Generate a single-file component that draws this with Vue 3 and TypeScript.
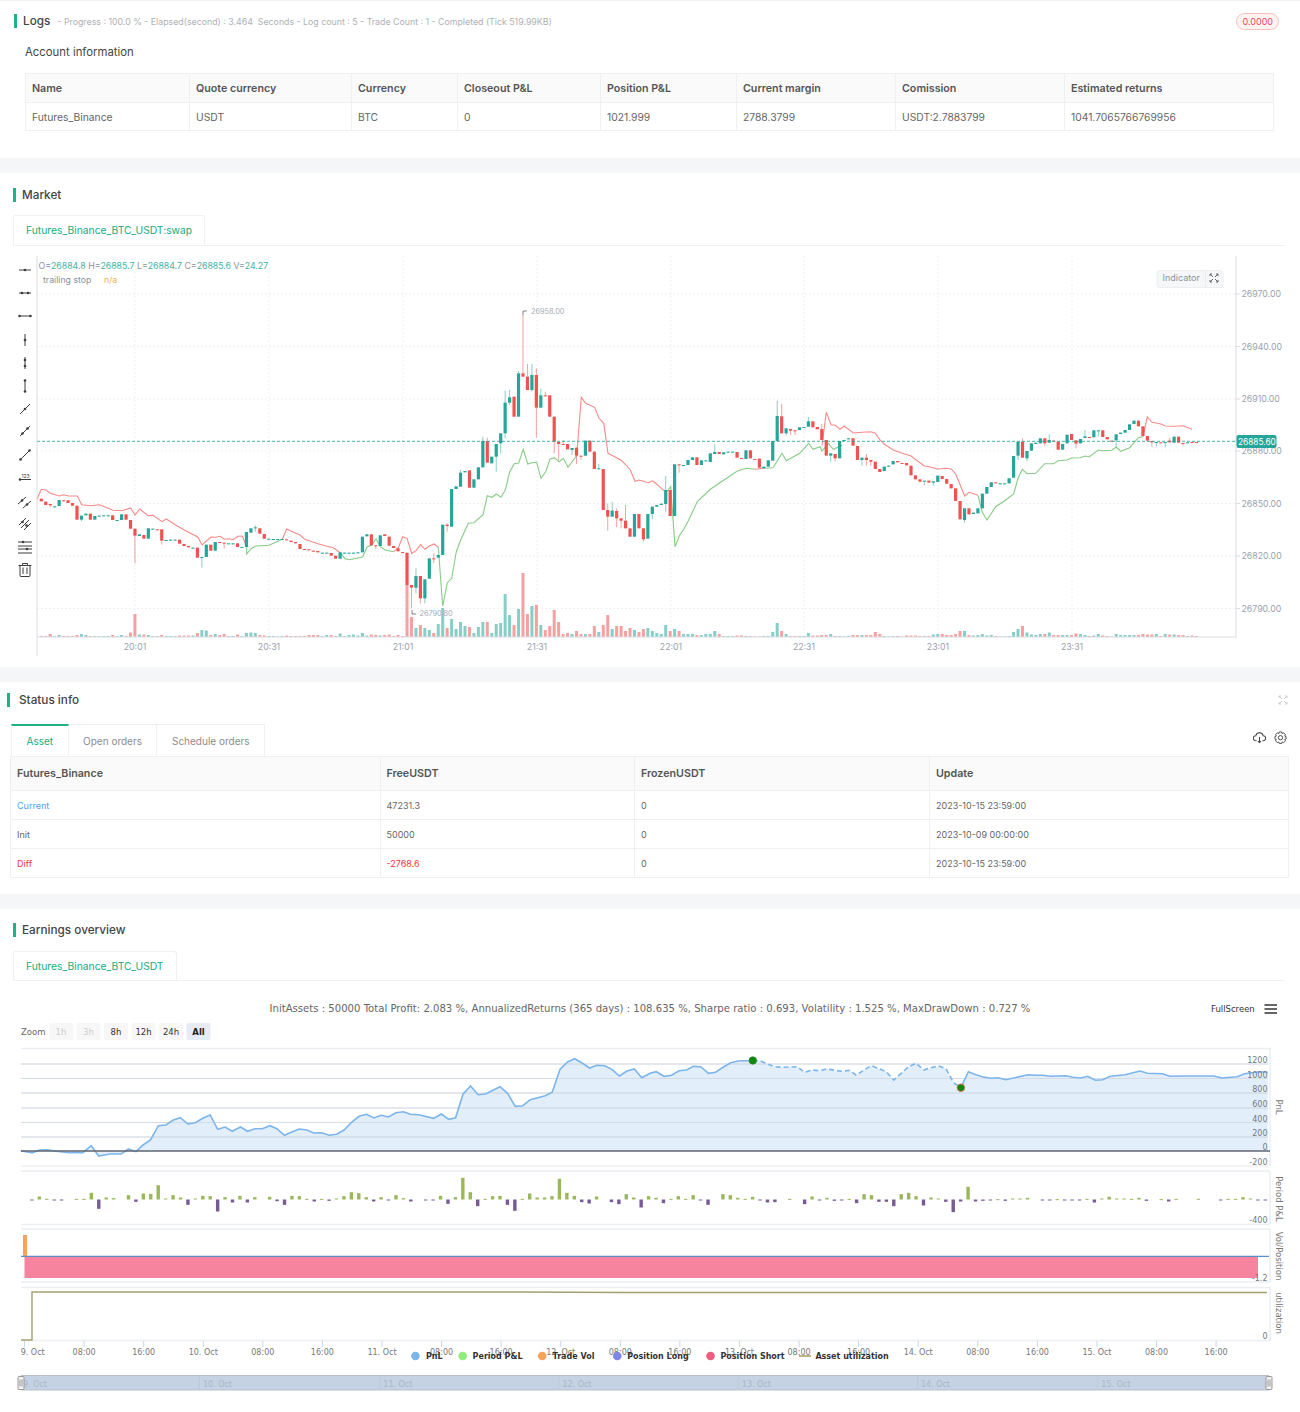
<script setup lang="ts">
// [open, close, wickTop, wickBottom], y measured in 1/3 px from the row base below
type Candle = [number, number, number?, number?];

const candlesA: Candle[] = [
  [746,754],[755,765],[762,766,0,772],[770,769],[768,750],[751,752],[751,759],[759,767],[767,809],[809,797,0,813],
  [796,791],[791,809],[809,798],[798,797],[797,796],[797,796],[796,810],[811,810],[810,793],[793,809],
  [810,836],[836,857,0,940],[858,853],[855,866],[866,835],[837,836],[838,839],[838,872,0,884],[871,870],[870,869],
  [870,869],[869,881],[882,888],[888,892],[894,893],[893,923],[923,921,0,953],[921,884],[884,902],[902,876],
  [876,877],[878,879,0,896],[881,880],[881,880],[880,891],[892,891],[891,846],[848,835],[835,832,826,845],[835,851],
  [852,866],[867,866],[868,867],[868,867],[868,867],[868,871],[872,876],[876,880],[882,897],[897,898],
  [898,901],[902,903],[903,907],[909,908],[909,908],[909,917],[917,926],[926,907],[909,908],[909,908],
  [909,908],[908,907],[907,860],[859,853],[853,886],[886,887,0,897],[888,856],[853,858],[860,887],[888,894],
  [895,904],[906,907],
];

const candlesB: Candle[] = [
  [788,885],[885,893,0,955],[893,858,835,910],[858,925,0,940],[925,868,0,940],[866,805],[805,808,790,820],[803,795],[795,704],[704,708,700,725],
  [710,597],[597,589],[590,548,540],[547,543],[541,593],[593,568],[568,532],[532,453,440],[453,518,443],[520,500],
  [500,462,0,545],[460,430,0,490],[430,338,302,445],[338,322,300,345],[320,380],[380,250,243],[250,260,75],[260,300,222],[300,255,222,305],[255,353,235,443],
  [353,316,296],[316,317,305],[316,380],[380,455,0,490],[456,462,0,510],[462,463,450],[462,478],[480,474,0,495],[473,497,0,522],[497,498,0,510],
  [497,452],[452,485],[485,537],[538,535,522],[537,660],[660,680,640,722],[680,662,635],[663,685,655,712],[685,692,0,715],[692,715,645],
  [715,740],[740,672],[672,715],[715,748,0,755],[746,672],[672,650,0,688],[650,645],[645,641],[642,600,558,665],[600,678],
  [678,523],[523,525,0,548],[526,525],[525,510],[510,502],[502,525],[525,511],[512,511],[516,490],[492,486,463],
  [486,492],[493,487],[486,485],[486,485],[486,503],[504,507],[507,481],[481,505],[507,508],[506,533],
  [535,530],[530,511],[512,453],[453,378,332],[379,430,342],[430,415,0,437],[417,422,0,435],[421,424,0,435],[420,412],[412,411],
  [410,394,381],[394,412],[411,418],[417,450,402],[450,497],[497,490,0,515],[492,505,0,515],[505,453],[451,450],[446,445],
  [445,467],[468,510],[510,503,0,527],[503,510,492,527],[510,515,0,527],[515,537],[537,546],[543,530],[528,527],[523,513],
  [513,517],[519,520],[519,526],[527,556],[556,568],[568,575],[575,572,0,585],[572,578],[578,574,0,587],[576,557],
  [558,567],[567,581],[582,595],[595,633],[633,688],[690,655,0,698],[655,673],[672,668],[670,655],[655,611],
  [611,591],[591,577],[577,578],[581,580],[581,580],[580,565],[563,498],[497,455,0,510],[455,503,445],[505,483,0,513],
  [482,460],[462,458],[460,445],[445,460,0,468],[458,450,433],[452,453],[455,479],[479,462],[460,434],[432,450],
  [451,461,0,475],[460,447],[444,439,420],[441,442],[442,421],[423,421,0,440],[421,441],[441,448],[452,453],[451,433,0,470],
  [432,428],[428,420],[420,403],[402,392],[392,409],[409,438],[438,452],[453,457,0,470],[457,456,0,470],[457,458],
  [457,456,0,472],[452,457,443],[458,440],[440,458],[459,460,0,467],[458,457],[456,457],[456,457],
];

const volumes = [
  1,1,3,1,2,1,1,1,2,3,2,1,1,1,1,1,2,1,2,1,4.5,23,
  2.5,2.5,2,1,1,2,1,1,1,1.5,1.5,1.5,1.5,4,7,6.5,2,3,2,3,1,1,2.5,1,4,4.5,4,2,1.5,1,1,0.5,1,1.5,1,1,1,1,2,2,2,1,2,2,1,3.5,1,2,2.5,1.5,4,1.5,2.5,2,1.5,2,2.5,1,2,1,
  52,20,9,12,9,7,4,13,29,9,18,8,15,11,10,4,10,15,15,4,13,14,43,22,12,28,64,23,31,32,12,7,11,27,15,3,4,3,6,3,3,3,11,5,12,22,8,11,11,6,9,7,5,8,9,6,4,3,12,6,8,6,3,3,3,2,2,3,3,6,3,
  1,1,1,1.5,1.5,1,1,0.5,0.5,1,1,5,14,6,3,1,1,1,1,4,1.5,1.5,
  2,2,3,1,1,0.5,1,2,2,2,2,2,5,3,1,0.5,1,1,0.5,1.5,1.5,1.5,1,1,1,2.5,3,3,2,2,3,6,6,2,1.5,2,3,1.5,2,1,0.5,0.5,1,5,8,11,4.5,2.5,2,3,3,4.5,2,2,2,2,2,3.5,3,2,1,1.5,3,1.5,1,0.5,3,2,2,2,2,2,3,2.5,2.5,3,1,3,2.5,2.5,2,2,1,1.5,1,1,
];

const candles = [
  ...candlesA.map((c) => ({ c, base: 250 })),
  ...candlesB.map((c) => ({ c, base: 290 })),
].map(({ c, base }, i) => {
  const [o, cl, hi, lo] = c;
  const y = (v: number) => base + v / 3;
  const up = cl < o;
  const top = y(Math.min(o, cl));
  return {
    x: 41.3 + i * 4.46,
    up,
    top,
    h: Math.max(Math.abs(o - cl) / 3, 1),
    hi: hi ? y(hi) : top,
    lo: lo ? y(lo) : top,
    vol: volumes[i] ?? 1,
  };
});

// traced points: x, y pairs in zoomed coords, mapped back to page px
const trace = (pts: number[], ox: number, oy: number, sx = 3, sy = 3) => {
  const out: string[] = [];
  for (let i = 0; i < pts.length; i += 2) out.push(`${(ox + pts[i] / sx).toFixed(1)},${(oy + pts[i + 1] / sy).toFixed(1)}`);
  return out.join(' ');
};

const stopLines = [
  { color: '#f98a88', pts: trace([111,748,124,718,138,720,151,730,178,738,191,734,205,738,232,738,245,764,272,767,299,764,339,781,366,782,392,774,405,795,419,777,445,797,459,796,486,815,499,807,526,824,553,840,593,861,606,885,633,861,647,862,660,859,673,868,687,866,700,869,713,859,727,858,740,890], 0, 250) },
  { color: '#86cc86', pts: trace([740,890,740,912,753,896,767,888,807,886,847,868], 0, 250) },
  { color: '#f98a88', pts: trace([847,868,860,837,874,844,900,855,914,868,954,881,981,889,1000,893,1021,908], 0, 250) },
  { color: '#86cc86', pts: trace([1021,908,1035,926,1048,929,1088,921,1101,891,1115,885,1128,866,1141,890,1155,900,1181,905], 0, 250) },
  { color: '#f98a88', pts: trace([-19,785,-5,773,8,740,21,745,35,790,48,782,62,764,75,778,88,768,102,762,115,772], 400, 290) },
  { color: '#86cc86', pts: trace([115,772,128,948,142,878,155,865,169,785,182,750,205,700,222,698,249,674,262,617,276,622,289,612,303,622,316,600,329,545,343,521,356,519,370,478,383,522,396,518,410,517,423,565,437,545,450,507,463,503,477,515,490,505,504,532,530,497], 400, 290) },
  { color: '#f98a88', pts: trace([530,497,544,322,557,340,584,352,597,385,611,400,624,490,638,497,664,511,678,525,691,540,705,574,718,570,745,578,758,573,772,584,798,608], 400, 290) },
  { color: '#86cc86', pts: trace([798,608,812,590,825,770,838,738,852,716,865,692,892,635,932,597,1012,543,1039,535,1065,538], 400, 290) },
  { color: '#f98a88', pts: trace([1065,538,1092,535], 400, 290) },
  { color: '#86cc86', pts: trace([1092,535,1119,533,1146,490,1159,512,1199,490,1226,460,1239,478,1260,470,1266,484,1285,460,1300,478,1326,466], 400, 290) },
  { color: '#f98a88', pts: trace([66,466,79,367,93,404,106,406,120,418,133,408,160,429,186,427,213,425,226,430,240,450,253,463,280,480,307,490,333,498,373,528,387,530,413,537,440,535,454,537,467,552,494,618,507,607,534,616], 800, 290) },
  { color: '#86cc86', pts: trace([534,616,547,667,561,690,587,650,614,632,641,612,654,565,667,538,681,551,707,550,734,521,761,521,774,512,801,510,815,504,841,503,855,498,868,500,895,480,908,482,935,481,949,471,962,484,989,473,1015,443,1029,440], 800, 290) },
  { color: '#f98a88', pts: trace([1029,440,1042,381,1055,396,1082,402,1096,408,1122,409,1149,407,1176,418], 800, 290) },
];

const priceLevels = [
  { y: 294, label: '26970.00' }, { y: 346.5, label: '26940.00' }, { y: 399, label: '26910.00' }, { y: 451, label: '26880.00' },
  { y: 503.5, label: '26850.00' }, { y: 556, label: '26820.00' }, { y: 608.5, label: '26790.00' },
];
const timeMarks = [
  { x: 135, label: '20:01' }, { x: 269, label: '20:31' }, { x: 403, label: '21:01' }, { x: 537, label: '21:31' },
  { x: 671, label: '22:01' }, { x: 804, label: '22:31' }, { x: 938, label: '23:01' }, { x: 1072, label: '23:31' },
];

const toolDots = (ax: number, ay: number, bx: number, by: number) => [[ax, ay], [bx, by]];
const tools = [
  { y: 270, d: 'M-6 0H6', dots: [[0, 0]] },
  { y: 293, d: 'M-6 0H6', dots: toolDots(-3, 0, 3, 0) },
  { y: 316, d: 'M-6 0H6', dots: toolDots(-5.5, 0, 5.5, 0) },
  { y: 340, d: 'M0-6V6', dots: [[0, 0]] },
  { y: 363, d: 'M0-6V6', dots: toolDots(0, -3, 0, 3) },
  { y: 386, d: 'M0-6V6', dots: toolDots(0, -5.5, 0, 5.5) },
  { y: 409, d: 'M-5 5L5-5', dots: [[0, 0]] },
  { y: 431, d: 'M-5 5L5-5', dots: toolDots(-2.5, 2.5, 2.5, -2.5) },
  { y: 455, d: 'M-5 5L5-5', dots: toolDots(-4.5, 4.5, 4.5, -4.5) },
  { y: 477, d: 'M-6 2.5H6', dots: [[-5, 2.5]] },
  { y: 502, d: 'M-7 2L1-5M-2 6L6-1', dots: toolDots(-3, -1.5, 2, 2.5) },
  { y: 523, d: 'M-6 2L1-5M-4 5L4-3M-1 7L6 0', dots: toolDots(-2.5, -1, 1.5, 2.5) },
  { y: 547, d: 'M-7-5H7M-7-1H7M-7 2H7M-7 6H7', dots: toolDots(-2, -5, 2, 2) },
];

const equitySolid = [50,482,78,489,95,480,115,479,135,484,165,488,200,488,220,467,238,498,265,492,292,492,310,477,328,485,345,465,363,450,382,407,400,405,418,390,435,383,453,402,471,398,490,384,507,375,525,418,543,411,560,424,580,411,597,424,615,416,633,416,651,407,668,416,686,436,705,425,722,417,740,420,757,429,775,428,794,436,812,433,830,420,848,397,866,379,884,373,902,384,919,376,937,381,955,368,973,365,990,373,1010,374,1046,385,1065,372,1082,388,1099,383,1117,312,1135,288,1153,314,1171,312,1206,290,1224,310,1243,349,1261,347,1279,329,1315,317,1332,307,1351,238,1369,216,1386,206,1404,219,1422,234,1440,226,1458,227,1476,238,1494,258,1512,243,1530,237,1548,263,1568,250];
const equityMid = [0,250,15,245,34,259,52,256,70,242,88,240,105,229,123,231,141,250,158,247,176,232,195,218,212,213,230,212,248,212];
const equityDrop = [248,212,265,212,283,222,301,230,319,232,355,230,373,247,390,240,408,242,426,237,462,244,480,241,498,256,516,240,534,227,552,236,570,245,588,270,606,250,624,230,642,220,660,240,678,233,696,228,714,236,732,278,750,293];
const equityEnd = [750,293,768,245,786,254,804,261,822,265,840,263,858,269,912,254,930,256,948,256,966,259,1002,257,1020,262,1038,264,1056,259,1074,271,1092,269,1110,259,1146,254,1182,243,1200,250,1236,251,1254,259,1290,258,1360,258,1380,264,1416,260,1434,251,1470,245,1490,247];

const XS = 2.412;
const eqA = trace(equitySolid, 0, 990, XS);
const eqB = trace(equityMid, 650, 990, XS);
const eqDash = trace(equityDrop, 650, 990, XS);
const eqC = trace(equityEnd, 650, 990, XS);
const equityArea = `20.7,1151 ${eqA} ${eqB} ${eqDash} ${eqC} 1268,1151`;

const pnlValues = [
  -2,9,2,-1,-1,0,2,2,20,-28,6,4,0,13,-7,18,17,43,3,13,6,-16,3,11,10,-36,7,-9,11,-9,7,0,8,-5,-16,11,10,2,-6,2,-4,3,10,22,19,7,-6,7,-2,13,4,-6,0,-2,-2,11,-13,7,65,22,-20,2,10,11,-16,-34,2,18,6,6,10,62,20,11,-8,-12,9,0,-8,-14,16,6,-24,10,
  5,-11,2,10,2,13,-2,-16,0,16,13,5,2,8,-2,-9,-8,0,2,0,-14,9,-2,5,-4,-2,2,-11,16,13,-7,-7,-20,16,20,10,-18,6,3,-7,-38,-6,38,-6,-4,-2,1,-4,3,3,5,0,-1,-1,1,-1,-1,-1,2,-9,3,8,3,3,2,5,-4,0,1,-6,2,0,0,2,0,0,-1,2,2,7,3,-3,-2,
];
const pnlBars = pnlValues.map((v, i) => ({
  x: 30.2 + i * 7.43,
  y: v > 0 ? 1199.5 - v / 3 : 1199.5,
  h: Math.max(Math.abs(v) / 3, v === 0 ? 0 : 1),
  up: v > 0,
}));

const pnlGrid = [1064, 1078.5, 1093, 1108, 1122.5, 1137, 1166];
const axisLabels = [
  { y: 1063, t: '1200' }, { y: 1077.5, t: '1000' }, { y: 1092, t: '800' }, { y: 1107, t: '600' }, { y: 1121.5, t: '400' },
  { y: 1136, t: '200' }, { y: 1150, t: '0' }, { y: 1165, t: '-200' }, { y: 1223, t: '-400' }, { y: 1281, t: '-1.2' }, { y: 1339, t: '0' },
];
const sideTitles = [
  { y: 1107, t: 'PnL' }, { y: 1199, t: 'Period P&L' }, { y: 1256, t: 'Vol/Position' }, { y: 1313, t: 'utilization' },
];

const tickNames = ['9. Oct', '08:00', '16:00', '10. Oct', '08:00', '16:00', '11. Oct', '08:00', '16:00', '12. Oct', '08:00', '16:00', '13. Oct', '08:00', '16:00', '14. Oct', '08:00', '16:00', '15. Oct', '08:00', '16:00'];
const xTicks = tickNames.map((t, i) => {
  const x = 24.5 + i * 59.58;
  return { t, x, lx: i === 0 ? 32.7 : x };
});

const rangeButtons = [
  { x: 49, w: 24, t: '1h', off: true }, { x: 76.5, w: 24, t: '3h', off: true }, { x: 104, w: 24, t: '8h' },
  { x: 131.5, w: 24, t: '12h' }, { x: 159, w: 24, t: '24h' }, { x: 186.5, w: 24, t: 'All', on: true },
];
const legend = [
  { cx: 415.4, tx: 426, color: '#7cb5ec', t: 'PnL' }, { cx: 462.7, tx: 472.6, color: '#90ed7d', t: 'Period P&L' },
  { cx: 542.2, tx: 552.6, color: '#f7a35c', t: 'Trade Vol' }, { cx: 617.3, tx: 627.2, color: '#8085e9', t: 'Position Long' },
  { cx: 710.5, tx: 720.5, color: '#f15c80', t: 'Position Short' },
];
const navMarks = [
  { x: 199.4, t: '10. Oct' }, { x: 379.8, t: '11. Oct' }, { x: 558.9, t: '12. Oct' }, { x: 738.3, t: '13. Oct' }, { x: 917.4, t: '14. Oct' }, { x: 1097.8, t: '15. Oct' },
];

const accountCols = ['Name', 'Quote currency', 'Currency', 'Closeout P&L', 'Position P&L', 'Current margin', 'Comission', 'Estimated returns'];
const accountRow = ['Futures_Binance', 'USDT', 'BTC', '0', '1021.999', '2788.3799', 'USDT:2.7883799', '1041.7065766769956'];
const accountWidths = [164, 162, 106, 143, 136, 159, 169, 209];

const assetCols = ['Futures_Binance', 'FreeUSDT', 'FrozenUSDT', 'Update'];
const assetRows = [
  { name: 'Current', free: '47231.3', frozen: '0', time: '2023-10-15 23:59:00', cls: 'blue' },
  { name: 'Init', free: '50000', frozen: '0', time: '2023-10-09 00:00:00', cls: '' },
  { name: 'Diff', free: '-2768.6', frozen: '0', time: '2023-10-15 23:59:00', cls: 'red' },
];
const assetWidths = [369.5, 254.5, 295, 359];
</script>

<template>
  <main class="page">
    <section class="panel logs">
      <header class="head">
        <div class="title"><h2>Logs</h2><span class="progress">- Progress : 100.0 % - Elapsed(second) : 3.464&nbsp; Seconds - Log count : 5 - Trade Count : 1 - Completed (Tick 519.99KB)</span></div>
        <span class="badge">0.0000</span>
      </header>
      <h3 class="account-title">Account information</h3>
      <table class="grid account">
        <colgroup><col v-for="w in accountWidths" :key="w" :style="{ width: w + 'px' }" /></colgroup>
        <thead><tr><th v-for="c in accountCols" :key="c">{{ c }}</th></tr></thead>
        <tbody><tr><td v-for="c in accountRow" :key="c">{{ c }}</td></tr></tbody>
      </table>
    </section>

    <section class="panel market">
      <header class="head"><div class="title"><h2>Market</h2></div></header>
      <div class="tabs"><span class="tab solo wide">Futures_Binance_BTC_USDT:swap</span></div>
      <svg class="chart" width="1300" height="421" viewBox="0 246 1300 421">
        <g class="grid-lines">
          <line v-for="p in priceLevels" :key="p.y" x1="37" x2="1236" :y1="p.y" :y2="p.y" />
          <line v-for="t in timeMarks" :key="t.x" :x1="t.x" :x2="t.x" y1="256" y2="637" />
        </g>
        <rect v-for="(c, i) in candles" :key="'v' + i" :x="c.x - 1.5" :y="637 - c.vol" width="3" :height="c.vol" :fill="c.up ? '#26a69a' : '#ef5350'" fill-opacity=".55" />
        <polyline v-for="(l, i) in stopLines" :key="i" :points="l.pts" fill="none" :stroke="l.color" stroke-width="1.1" />
        <g v-for="(c, i) in candles" :key="'c' + i" :fill="c.up ? '#26a69a' : '#ef5350'">
          <rect :x="c.x - 0.5" :y="c.hi" width="1" :height="Math.max(c.lo - c.hi, c.top + c.h - c.hi)" fill-opacity=".55" />
          <rect :x="c.x - 1.6" :y="c.top" width="3.2" :height="c.h" />
        </g>
        <line x1="37" x2="1236" y1="441.3" y2="441.3" stroke="#26a69a" stroke-opacity=".85" stroke-dasharray="3 2" />
        <path d="M37 256V656M37 637H1236M1236 256V637" fill="none" stroke="#d9dce1" />

        <g v-for="p in priceLevels" :key="'l' + p.y">
          <line x1="1236" x2="1240" :y1="p.y" :y2="p.y" stroke="#d9dce1" />
          <text class="axis-text" x="1241.5" :y="p.y + 3">{{ p.label }}</text>
        </g>
        <text v-for="t in timeMarks" :key="'t' + t.x" class="axis-text" :x="t.x" y="649.5" text-anchor="middle">{{ t.label }}</text>

        <rect x="1236.5" y="435" width="40" height="13" rx="2" fill="#26a69a" />
        <text class="tag-text" x="1238" y="444.5">26885.60</text>

        <text class="ohlc" x="38.5" y="269">O=<tspan class="teal">26884.8</tspan> H=<tspan class="teal">26885.7</tspan> L=<tspan class="teal">26884.7</tspan> C=<tspan class="teal">26885.6</tspan> V=<tspan class="teal">24.27</tspan></text>
        <text class="ohlc" x="43" y="282.5">trailing stop</text>
        <text class="ohlc na" x="104" y="282.5">n/a</text>

        <rect x="1157" y="270.5" width="66" height="17" rx="3" fill="#f6f7f8" stroke="#eceef0" />
        <line x1="1205.5" x2="1205.5" y1="271" y2="287" stroke="#e9ebee" />
        <text class="indicator" x="1162.5" y="281">Indicator</text>
        <path d="M1210 274l3 3M1210 274h2M1210 274v2M1218 274l-3 3M1218 274h-2M1218 274v2M1210 282l3-3M1210 282h2M1210 282v-2M1218 282l-3-3M1218 282h-2M1218 282v-2" fill="none" stroke="#666" stroke-width="1" />

        <path d="M523 311v4M523 311h4" fill="none" stroke="#666" stroke-width=".8" />
        <text class="mark-text" x="531" y="313.5">26958.00</text>
        <path d="M412 610v4h4" fill="none" stroke="#666" stroke-width=".8" />
        <text class="mark-text" x="419.5" y="615.5">26790.80</text>

        <g v-for="t in tools" :key="t.y" :transform="`translate(25 ${t.y})`" stroke="#3d3d3d" fill="#3d3d3d" stroke-width="1">
          <path :d="t.d" fill="none" />
          <circle v-for="(d, i) in t.dots" :key="i" :cx="d[0]" :cy="d[1]" r="1.3" stroke="none" />
        </g>
        <text class="tool-123" x="21.5" y="478">123</text>
        <g transform="translate(25 570)" fill="none" stroke="#3d3d3d" stroke-width="1">
          <path d="M-6.5-4.5H6.5M-2.5-4.5V-6.5H2.5V-4.5M-5-4.5V5.5Q-5 6.5-4 6.5H4Q5 6.5 5 5.5V-4.5M-2-2.5V4M2-2.5V4" />
        </g>
      </svg>
    </section>

    <section class="panel status">
      <header class="head">
        <div class="title wide"><h2>Status info</h2></div>
        <svg class="expand" width="10" height="10" viewBox="0 0 10 10"><path d="M1 1l3 3M1 1h2M1 1v2M9 1L6 4M9 1H7M9 1v2M1 9l3-3M1 9h2M1 9V7M9 9L6 6M9 9H7M9 9V7" fill="none" stroke="#ccc" /></svg>
      </header>
      <div class="status-tabs">
        <div class="tab-row">
          <span class="stab active">Asset</span>
          <span class="stab">Open orders</span>
          <span class="stab">Schedule orders</span>
        </div>
        <div class="actions">
          <svg width="13" height="13" viewBox="0 0 14 14"><path d="M3.8 10.5H3.2A2.7 2.7 0 0 1 3 5.1 4.1 4.1 0 0 1 11 5.1 2.7 2.7 0 0 1 10.8 10.5H10.2M7 6.5V12.5M5.3 10.8L7 12.5 8.7 10.8" fill="none" stroke="#444" stroke-width="1.1" /></svg>
          <svg width="13" height="13" viewBox="0 0 14 14"><path d="M5.7 1H8.3L8.8 2.8 10.4 2 12.3 3.9 11.5 5.5 13 6V8.6L11.5 9.1 12.3 10.7 10.4 12.6 8.8 11.8 8.3 13.4H5.7L5.2 11.8 3.6 12.6 1.7 10.7 2.5 9.1 1 8.6V6L2.5 5.5 1.7 3.9 3.6 2 5.2 2.8Z" fill="none" stroke="#444" stroke-width="1" /><circle cx="7" cy="7.2" r="2.3" fill="none" stroke="#444" /></svg>
        </div>
      </div>
      <table class="grid asset">
        <colgroup><col v-for="w in assetWidths" :key="w" :style="{ width: w + 'px' }" /></colgroup>
        <thead><tr><th v-for="c in assetCols" :key="c">{{ c }}</th></tr></thead>
        <tbody>
          <tr v-for="r in assetRows" :key="r.name">
            <td :class="r.cls">{{ r.name }}</td>
            <td :class="{ red: r.cls === 'red' }">{{ r.free }}</td>
            <td>{{ r.frozen }}</td>
            <td>{{ r.time }}</td>
          </tr>
        </tbody>
      </table>
    </section>

    <section class="panel earnings">
      <header class="head"><div class="title"><h2>Earnings overview</h2></div></header>
      <div class="tabs short"><span class="tab solo">Futures_Binance_BTC_USDT</span></div>
      <svg class="chart hc" width="1300" height="431" viewBox="0 981 1300 431">
        <text class="hc-title" x="650" y="1011.5" text-anchor="middle">InitAssets : 50000 Total Profit: 2.083 %, AnnualizedReturns (365 days) : 108.635 %, Sharpe ratio : 0.693, Volatility : 1.525 %, MaxDrawDown : 0.727 %</text>
        <text class="hc-small dark" x="1211" y="1012">FullScreen</text>
        <path d="M1264.5 1005H1277M1264.5 1009H1277M1264.5 1013H1277" stroke="#666" stroke-width="2" />

        <text class="hc-small" x="21" y="1035">Zoom</text>
        <g v-for="b in rangeButtons" :key="b.t">
          <rect :x="b.x" y="1023" :width="b.w" height="17" rx="2" :fill="b.on ? '#e6ebf5' : '#f7f7f7'" />
          <text class="hc-small" :class="{ off: b.off, on: b.on, dark: !b.off }" :x="b.x + b.w / 2" y="1035" text-anchor="middle">{{ b.t }}</text>
        </g>

        <path d="M21 1048.5H1270M21 1171H1270M21 1224.5H1270M21 1229H1270M21 1282H1270M21 1287.5H1270M21 1340.5H1270" stroke="#eceef2" stroke-width="1.5" fill="none" />
        <path d="M1270 1048V1166M1270 1171V1224M1270 1229V1282M1270 1287V1341" stroke="#dfe5f0" fill="none" />
        <line v-for="y in pnlGrid" :key="y" x1="21" x2="1268" :y1="y" :y2="y" stroke="#e6e6e6" />

        <polygon :points="equityArea" fill="#7cb5ec" fill-opacity=".22" />
        <line v-for="y in pnlGrid.slice(0, 6)" :key="'o' + y" x1="21" x2="1268" :y1="y" :y2="y" stroke="#d5dce6" />
        <polyline :points="`${eqA} ${eqB}`" fill="none" stroke="#7cb5ec" stroke-width="1.6" />
        <polyline :points="eqDash" fill="none" stroke="#7cb5ec" stroke-width="1.6" stroke-dasharray="5 3" />
        <polyline :points="eqC" fill="none" stroke="#7cb5ec" stroke-width="1.6" />
        <line x1="21" x2="1270" y1="1151" y2="1151" stroke="#5f6670" stroke-width="1.4" />
        <circle cx="752.8" cy="1060.5" r="3.8" fill="#0a8a0a" stroke="#3a7a3a" stroke-width=".6" />
        <circle cx="960.9" cy="1087.7" r="3.8" fill="#0a8a0a" stroke="#e8735a" stroke-width=".9" />

        <rect v-for="(b, i) in pnlBars" :key="'p' + i" :x="b.x" :y="b.y" width="3.4" :height="b.h" :fill="b.up ? '#9ab75c' : '#7a5a96'" />

        <rect x="24.5" y="1257" width="1233.5" height="21" fill="#f7849f" />
        <rect x="23" y="1235" width="4" height="21.5" fill="#f7a35c" />
        <line x1="21" x2="1269" y1="1256.3" y2="1256.3" stroke="#5a8fc7" stroke-width="1.2" />

        <polyline points="21,1340 32,1340 32,1292 520,1292 620,1292.5 1267,1292.5" fill="none" stroke="#a59e72" stroke-width="1.4" />

        <g v-for="t in xTicks" :key="t.x">
          <line :x1="t.x" :x2="t.x" y1="1341" y2="1347" stroke="#ccd6eb" />
          <text class="hc-tick" :x="t.lx" y="1354.5" text-anchor="middle">{{ t.t }}</text>
        </g>
        <text v-for="a in axisLabels" :key="a.y" class="hc-tick" x="1267.5" :y="a.y" text-anchor="end">{{ a.t }}</text>
        <text v-for="s in sideTitles" :key="s.t" class="hc-tick side" x="0" y="0" text-anchor="middle" :transform="`translate(1276 ${s.y}) rotate(90)`">{{ s.t }}</text>

        <g v-for="l in legend" :key="l.t">
          <circle :cx="l.cx" cy="1356" r="4.3" :fill="l.color" />
          <text class="hc-legend" :x="l.tx" y="1359">{{ l.t }}</text>
        </g>
        <line x1="799" x2="811" y1="1356" y2="1356" stroke="#a59a5d" stroke-width="1.5" />
        <text class="hc-legend" x="815.4" y="1359">Asset utilization</text>

        <rect x="21" y="1375" width="1248" height="15" fill="#c5d2e3" />
        <path d="M21 1375.5H1269M21 1390H1269" stroke="#b9bfc8" fill="none" />
        <text class="nav-text" x="23" y="1387">9. Oct</text>
        <g v-for="m in navMarks" :key="m.t">
          <line :x1="m.x" :x2="m.x" y1="1375" y2="1390" stroke="#bccadd" />
          <text class="nav-text" :x="m.x + 3.5" y="1387">{{ m.t }}</text>
        </g>
        <g v-for="x in [17.5, 1265.5]" :key="x" :transform="`translate(${x} 1376)`">
          <rect x=".5" y=".5" width="6" height="13" rx="1" fill="#f2f2f2" stroke="#999" />
          <path d="M2.5 3.5V10.5M4.5 3.5V10.5" stroke="#999" />
        </g>
      </svg>
    </section>
  </main>
</template>

<style>
html, body { margin: 0; background: #fff; }
</style>

<style scoped>
.page {
  width: 1300px;
  height: 1412px;
  overflow: hidden;
  background: #f5f6f8;
  font-family: Inter, "Liberation Sans", sans-serif;
  color: #444;
}

.panel {
  background: #fff;
  margin-bottom: 15px;
}

.logs {
  border-top: 1px solid #eff0f2;
  padding: 13px 0 27px;
}

.head {
  height: 14px;
  display: flex;
  justify-content: space-between;
  align-items: center;
}

.title {
  display: flex;
  align-items: center;
  height: 14px;
  margin-left: 13px;
  padding-left: 6px;
  border-left: 3px solid #1eb284;
}

.logs .title { margin-left: 14px; }

.title h2 {
  margin: 0;
  font-size: 11.75px;
  line-height: 14px;
  font-weight: 500;
  color: #444;
}

.title.wide { margin-left: 7px; padding-left: 9px; }

.progress {
  margin-left: 7px;
  font-size: 8.8px;
  color: #aeb1b6;
}

.badge {
  margin-right: 21px;
  height: 15px;
  line-height: 15px;
  padding: 0 5px;
  border: 1px solid #f9c0c0;
  border-radius: 9px;
  background: #fff3f2;
  color: #ec4a58;
  font-size: 9px;
}

.account-title {
  margin: 16px 0 13px 25px;
  font-size: 11.35px;
  line-height: 16px;
  font-weight: 400;
  color: #444;
}

.grid {
  border-collapse: collapse;
  table-layout: fixed;
}

.grid th, .grid td {
  border: 1px solid #f0f0f0;
  text-align: left;
  padding: 0 6px;
  white-space: nowrap;
}

.grid th {
  background: #fafafa;
  font-size: 10.7px;
  font-weight: 600;
  color: #555;
}

.grid td { color: #666; }

.account { width: 1249px; margin-left: 25px; }
.account th { height: 28px; }
.account td { height: 27px; font-size: 10.3px; }

.market { padding-top: 15px; height: 479px; }

.tabs {
  margin: 13px 15px 0 13px;
  height: 30px;
  border-bottom: 1px solid #f0f0f0;
}

.tabs.short { height: 29px; margin-top: 14px; }
.tabs.short .tab { line-height: 28px; }

.tab {
  display: inline-block;
  box-sizing: border-box;
  height: 100%;
  padding: 0 12px;
  line-height: 29px;
  font-size: 10.3px;
  color: #17ac7e;
  background: #fff;
  border: 1px solid #f0f0f0;
  border-bottom: 0;
  border-radius: 3px 3px 0 0;
}

.chart { display: block; }

.grid-lines line {
  stroke: #f0f1f3;
  stroke-dasharray: 2 2;
}

.axis-text { font-size: 8.75px; fill: #9aa1ab; }
.tag-text { font-size: 8.3px; fill: #fff; }
.ohlc { font-size: 8.75px; fill: #8b929c; }
.ohlc .teal { fill: #3fb3a6; }
.ohlc.na { fill: #f5ad55; }
.indicator { font-size: 9px; fill: #8d939c; }
.mark-text { font-size: 7.3px; fill: #a4abb6; }
.tool-123 { font-size: 5px; fill: #3d3d3d; }

.status { padding-top: 11px; height: 201px; }

.expand { margin-right: 12px; }

.status-tabs {
  margin: 17px 11px 0;
  height: 32px;
  display: flex;
  justify-content: space-between;
}

.tab-row { display: flex; height: 32px; }

.stab {
  box-sizing: border-box;
  padding: 0 14.5px;
  line-height: 32px;
  font-size: 10px;
  color: #8c8c8c;
  border-right: 1px solid #f0f0f0;
  border-top: 1px solid #f0f0f0;
}

.stab.active {
  color: #17ac7e;
  border-top: 2px solid #1eb284;
  line-height: 31px;
  border-left: 1px solid #f0f0f0;
}

.actions { display: flex; gap: 8px; margin: 7px 2px 0 0; height: 13px; }

.asset { width: 1278px; margin-left: 10px; }
.asset th { height: 33px; }
.asset td { height: 28px; font-size: 9px; }
.grid td.blue { color: #4c9ffb; }
.grid td.red { color: #f5373c; }

.earnings { padding-top: 14px; height: 489px; margin: 0; }

.hc text { font-family: "DejaVu Sans", "Liberation Sans", sans-serif; }
.hc-title { font-size: 10.1px; fill: #666; }
.hc-small { font-size: 8.5px; fill: #666; }
.hc-small.dark { fill: #333; }
.hc-small.off { fill: #ccc; }
.hc-small.on { font-weight: 700; fill: #222; }
.hc-tick { font-size: 8px; fill: #777; }
.hc-tick.side { font-size: 8.5px; }
.hc-legend { font-size: 8px; font-weight: 700; fill: #333; }
.nav-text { font-size: 8px; fill: #a9b6c8; }
</style>
